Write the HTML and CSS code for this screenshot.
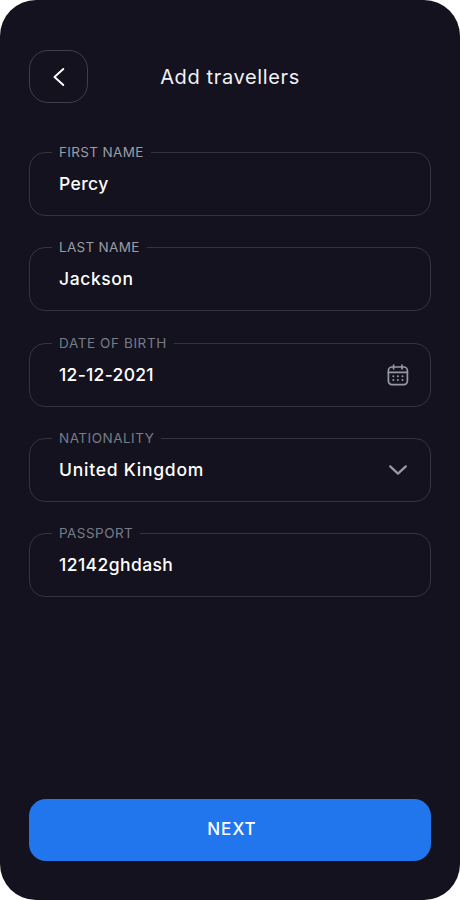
FILE: index.html
```html
<!DOCTYPE html>
<html lang="en">
<head>
<meta charset="utf-8">
<title>Add travellers</title>
<link rel="stylesheet" href="styles.css">
</head>
<body>
<main class="screen">
  <header class="header">
    <button class="back" type="button" aria-label="Back">
      <svg width="12" height="20" viewBox="0 0 12 20"><path d="M10.3 2 1.5 10 10.3 18"/></svg>
    </button>
    <h1 class="title">Add travellers</h1>
  </header>
  <form class="form">
    <fieldset class="field bright first"><legend>FIRST NAME</legend><div class="row"><span class="value">Percy</span></div></fieldset>
    <fieldset class="field bright last"><legend>LAST NAME</legend><div class="row"><span class="value">Jackson</span></div></fieldset>
    <fieldset class="field birth"><legend>DATE OF BIRTH</legend><div class="row"><span class="value">12-12-2021</span>
      <svg class="calendar" width="22" height="22" viewBox="0 0 22 22"><rect x="1.4" y="3" width="19" height="17.6" rx="3.6"/><path d="M1.4 8.4h19M6.6 1.2v3.6M15 1.2v3.6"/><path class="dots" d="M6.3 12.2h.01M10.9 12.2h.01M15.5 12.2h.01M6.3 16h.01M10.9 16h.01M15.5 16h.01"/></svg></div></fieldset>
    <fieldset class="field nation"><legend>NATIONALITY</legend><div class="row"><span class="value">United Kingdom</span>
      <svg class="chevron" width="22" height="22" viewBox="0 0 22 22"><path d="m3.2 7.4 7.8 7.2 7.8-7.2"/></svg></div></fieldset>
    <fieldset class="field passport"><legend>PASSPORT</legend><div class="row"><span class="value">12142ghdash</span></div></fieldset>
  </form>
  <button class="next" type="button">NEXT</button>
</main>
</body>
</html>
```
FILE: styles.css
```css
* { box-sizing: border-box; }
body { margin: 0; background: #fff; font-family: Inter, "Liberation Sans", sans-serif; }
button { font: inherit; cursor: pointer; }
svg { display: block; fill: none; stroke-linecap: round; stroke-linejoin: round; }
.screen {
  display: flex;
  flex-direction: column;
  width: 460px;
  height: 900px;
  padding: 50px 29px 39px;
  border-radius: 36px;
  background: #14121e;
  color: #fff;
}
.header { display: grid; grid-template-columns: 59px 1fr 59px; align-items: center; height: 53px; }
.back {
  display: grid;
  place-items: center;
  width: 59px;
  height: 53px;
  padding: 0;
  border: 1px solid #3f3d50;
  border-radius: 19px;
  background: none;
}
.back svg { stroke: #fff; stroke-width: 1.9; }
.title { margin: 0; font-size: 20px; font-weight: 400; line-height: 24px; letter-spacing: .63px; text-align: center; white-space: nowrap; color: #f1f1f3; }
.form { display: grid; grid-auto-rows: 72px; row-gap: 23.33px; margin-top: 41px; }
.field {
  min-width: 0;
  height: 72px;
  margin: 0;
  padding: 0 21px 0 22px;
  border: 1px solid #363440;
  border-radius: 16px;
}
.field legend { height: 17px; padding: 0 7px; font-size: 13.5px; line-height: 16px; color: #767c88; white-space: nowrap; }
.field.bright legend { color: #9a9ca6; }
.row { display: flex; align-items: center; justify-content: space-between; height: 46px; padding: 0 0 0 7px; }
.value { font-size: 17.5px; font-weight: 500; line-height: 24px; white-space: nowrap; }
.first legend { letter-spacing: .35px; }
.first .value { letter-spacing: .4px; }
.last legend { letter-spacing: .3px; }
.last .value { letter-spacing: .6px; }
.birth legend { letter-spacing: .6px; }
.birth .value { letter-spacing: .3px; }
.nation legend { letter-spacing: .5px; }
.nation .value { letter-spacing: .76px; }
.passport legend { letter-spacing: .45px; }
.passport .value { letter-spacing: .42px; }
.calendar { stroke: #9699a4; stroke-width: 1.7; }
.calendar .dots { stroke-width: 2; }
.chevron { stroke: #9699a4; stroke-width: 2.3; }
.next {
  height: 62px;
  margin-top: auto;
  padding: 0 0 2px 4px;
  border: 0;
  border-radius: 17px;
  background: #2176ee;
  color: #fff;
  font-size: 17px;
  font-weight: 500;
  letter-spacing: 1px;
}
```
